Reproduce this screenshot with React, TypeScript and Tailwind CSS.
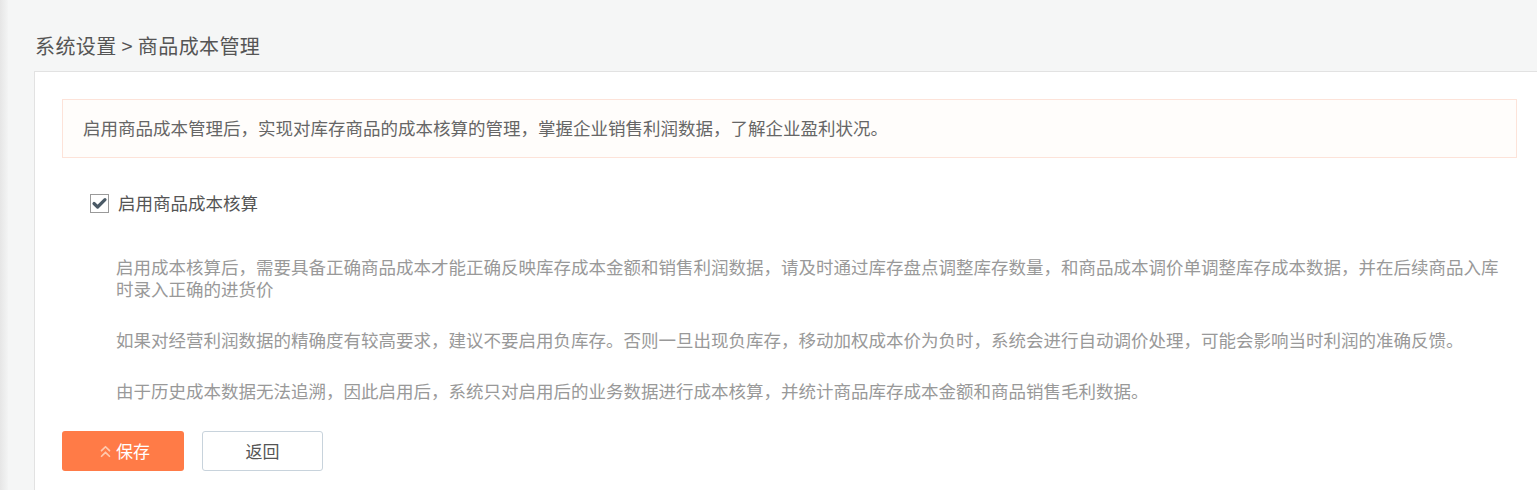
import { ChevronsUp } from "lucide-react";

const font = { fontFamily: '"Noto Sans CJK SC", "Noto Sans", sans-serif' };

const notes = [
  "启用成本核算后，需要具备正确商品成本才能正确反映库存成本金额和销售利润数据，请及时通过库存盘点调整库存数量，和商品成本调价单调整库存成本数据，并在后续商品入库时录入正确的进货价",
  "如果对经营利润数据的精确度有较高要求，建议不要启用负库存。否则一旦出现负库存，移动加权成本价为负时，系统会进行自动调价处理，可能会影响当时利润的准确反馈。",
  "由于历史成本数据无法追溯，因此启用后，系统只对启用后的业务数据进行成本核算，并统计商品库存成本金额和商品销售毛利数据。",
];

function CheckBox() {
  return (
    <svg width="19" height="19" viewBox="0 0 19 19" className="shrink-0">
      <rect x="0.5" y="0.5" width="18" height="18" fill="#fff" stroke="#9a9a9a" />
      <path
        d="M4 9.5 L7.6 13 L15 5.6"
        fill="none"
        stroke="#4b5a66"
        strokeWidth="3.2"
        strokeLinecap="round"
        strokeLinejoin="round"
      />
    </svg>
  );
}

export default function App() {
  return (
    <div className="flex h-[490px] overflow-hidden bg-[#f5f6f6]" style={font}>
      {/* sidebar shadow */}
      <div className="w-[8px] shrink-0 bg-gradient-to-r from-[#e6e6e6] to-[#f3f4f4]" />

      <div className="flex min-w-0 flex-1 flex-col">
        {/* Breadcrumb */}
        <div className="ml-[27px] pt-[34px] pb-[13px] text-[20px] leading-[24px] tracking-[0.4px] text-[#555]">
          系统设置 &gt; 商品成本管理
        </div>

        {/* Card */}
        <div className="ml-[26px] flex-1 border-t border-l border-[#e2e2e2] bg-white pt-[27px] pl-[27px] pr-[20px]">
          <div className="flex h-[59px] items-center border border-[#fde3d9] bg-[#fffdfb] pl-[20px] text-[17.5px] text-[#666]">
            启用商品成本管理后，实现对库存商品的成本核算的管理，掌握企业销售利润数据，了解企业盈利状况。
          </div>

          <label className="mt-[33px] ml-[28px] flex h-[24px] items-center gap-[9px] text-[17.5px] text-[#555]">
            <CheckBox />
            <span>启用商品成本核算</span>
          </label>

          <div className="mt-[41px] ml-[54px] mr-[12px] flex flex-col gap-[29px] text-[17.5px] leading-[22px] text-[#999]">
            {notes.map((t, i) => (
              <p key={i}>{t}</p>
            ))}
          </div>

          <div className="mt-[29px] flex gap-[18px]">
            <button className="flex h-[40px] w-[122px] items-center justify-center gap-[1px] rounded-[3px] bg-[#ff7b47] text-[17px] text-white">
              <ChevronsUp size={19} strokeWidth={2.2} className="text-[#ffc9ad]" />
              保存
            </button>
            <button className="flex h-[40px] w-[121px] items-center justify-center rounded-[3px] border border-[#c8d3dc] bg-white text-[17px] text-[#555]">
              返回
            </button>
          </div>
        </div>
      </div>
    </div>
  );
}
